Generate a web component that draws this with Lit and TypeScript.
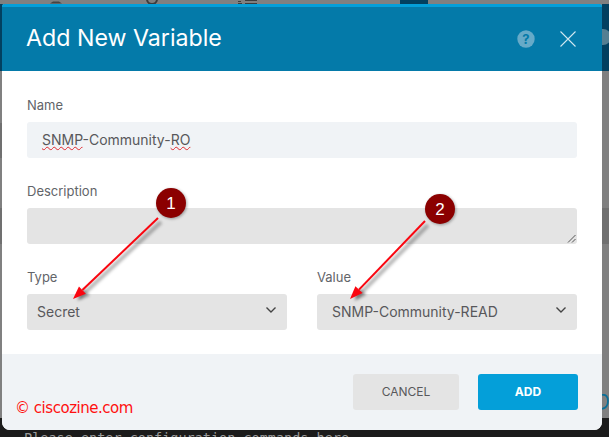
import { LitElement, html, css, svg } from "lit";
import { customElement } from "lit/decorators.js";

@customElement("app-root")
export class AppRoot extends LitElement {
  static styles = css`
    :host { display: block; width: 609px; height: 437px; overflow: hidden; position: relative; background: #808080; font-family: Inter, "Liberation Sans", sans-serif; }
    .back { position: absolute; }
    .band-l { left: 0; top: 4px; width: 3px; height: 67px; background: #024060; }
    .band-r { left: 602px; top: 4px; width: 7px; height: 67px; background: #024060; overflow: hidden; }
    .help-bg { position: absolute; left: -7px; top: 25px; width: 16px; height: 16px; border-radius: 50%; background: #557f92; }
    .strip { background: #707070; }
    .s1 { left: 0; top: 123px; width: 2px; height: 35px; }
    .s2 { left: 0; top: 208px; width: 2px; height: 36px; }
    .s3 { left: 602px; top: 208px; width: 7px; height: 36px; }
    .block { left: 400px; top: 0; width: 28px; height: 4px; background: #024060; }
    .term { left: 0; top: 418px; width: 609px; height: 19px; background: #1b1b1b; color: #9a9a9a; font: 13.5px/1 "DejaVu Sans Mono", monospace; padding: 13.5px 0 0 24px; box-sizing: border-box; white-space: pre; }
    .topglyph { position: absolute; top: 0; left: 0; }
    .sideglyph { position: absolute; left: 602px; top: 394px; }
    .modal { position: absolute; left: 2px; top: 4px; width: 600px; height: 426px; display: flex; flex-direction: column; background: #fff; border-radius: 3px 3px 8px 8px; overflow: hidden; }
    header { height: 64px; flex: none; border-top: 3px solid #049fd9; background: #047aa9; display: flex; align-items: center; padding: 0 26px 0 24px; color: #fff; }
    h1 { margin: 0; flex: 1; font-size: 23.2px; font-weight: 400; line-height: 1; }
    .hd-icons { display: flex; align-items: center; gap: 25px; }
    .hd-icons svg { display: block; }
    .close { margin-top: -1px; }
    main { flex: 1; padding: 25px 25px 0; display: flex; flex-direction: column; }
    label { display: block; height: 18px; line-height: 18px; font-size: 13px; color: #626469; margin-bottom: 8px; }
    .field { height: 36px; border-radius: 3px; box-sizing: border-box; display: flex; align-items: center; font-size: 14px; color: #58585b; position: relative; flex: none; }
    .name { background: #f0f3f6; padding: 0 0 2px 15px; margin-bottom: 24px; }
    .spell { text-decoration: underline wavy #e0282e 1px; text-underline-offset: 1px; text-decoration-skip-ink: none; }
    .desc { background: #e4e4e4; margin-bottom: 24px; }
    .grip { position: absolute; right: 1px; bottom: 1px; }
    .row { display: grid; grid-template-columns: 260px 260px; gap: 30px; }
    .sel { background: #e4e4e4; justify-content: space-between; padding: 0 10px 2px 10px; }
    .sel.v { padding-left: 15px; }
    .sel svg { display: block; margin-bottom: 2px; }
    footer { height: 76px; box-sizing: border-box; flex: none; background: #f0f3f6; display: flex; align-items: flex-start; justify-content: flex-end; gap: 19px; padding: 20px 24px 0 0; position: relative; }
    button { height: 36px; border: 0; border-radius: 3px; font: 400 12px Inter, "Liberation Sans", sans-serif; padding: 0 0 2px; }
    .cancel { width: 106px; background: #e4e4e4; color: #58585b; }
    .add { width: 100px; background: #049fd9; color: #fff; font-weight: 700; }
    .mark { position: absolute; left: 15px; top: 401px; color: #ff1010; font: 15px/1 "DejaVu Sans", sans-serif; letter-spacing: -0.47px; }
    .anno { position: absolute; left: 0; top: 0; pointer-events: none; }
    .num { font: 17px "Liberation Sans", sans-serif; fill: #fff; text-anchor: middle; }
  `;

  private arrow(x1: number, y1: number, x2: number, y2: number) {
    const dx = x2 - x1, dy = y2 - y1;
    const l = Math.hypot(dx, dy), ux = dx / l, uy = dy / l;
    const bx = x2 - ux * 13, by = y2 - uy * 13;
    const nx = -uy * 5, ny = ux * 5;
    const head = `${x2},${y2} ${bx + nx},${by + ny} ${bx - nx},${by - ny}`;
    return svg`
      <line x1=${x1 + 3} y1=${y1 + 4} x2=${x2 + 6} y2=${y2 - 1} stroke="#000" stroke-opacity=".28" stroke-width="4" filter="url(#b)"/>
      <polygon points=${head} fill="#000" fill-opacity=".3" transform="translate(4 2)" filter="url(#b)"/>
      <line x1=${x1} y1=${y1} x2=${bx} y2=${by} stroke="#fa0610" stroke-width="2"/>
      <polygon points=${head} fill="#fa0610"/>`;
  }

  private badge(cx: number, cy: number, n: string) {
    return svg`
      <circle cx=${cx + 1} cy=${cy + 1} r="15" fill="#000" fill-opacity=".35" filter="url(#b)"/>
      <circle cx=${cx} cy=${cy} r="15" fill="#8b0000"/>
      <text class="num" x=${cx} y=${cy + 6}>${n}</text>`;
  }

  private chevron() {
    return html`<svg width="12" height="8" viewBox="0 0 12 8"><path d="M1.5 1.5 6 6l4.5-4.5" fill="none" stroke="#444" stroke-width="1.4"/></svg>`;
  }

  render() {
    return html`
      <svg class="topglyph" width="609" height="4" viewBox="0 0 609 4">
        <path d="M50 3.5h12l-3-2h-6z" fill="#444"/>
        <circle cx="152" cy="-1" r="5" fill="none" stroke="#3c3c3c" stroke-width="2"/>
        <path d="M238 1.5h3M238 3.5h4M245 .5h12M245 3.5h12" stroke="#3c3c3c" stroke-width="1.2"/>
      </svg>
      <div class="back block"></div>
      <div class="back band-l"></div>
      <div class="back band-r"><div class="help-bg"></div></div>
      <div class="back strip s1"></div>
      <div class="back strip s2"></div>
      <div class="back strip s3"></div>
      <svg class="sideglyph" width="7" height="17" viewBox="0 0 7 17"><path d="M0 1c4-1 6 2 6 6s-2 7-6 8" fill="none" stroke="#0b6f98" stroke-width="1.8"/></svg>
      <div class="back term">Please enter configuration commands here</div>
      <div class="modal">
        <header>
          <h1>Add New Variable</h1>
          <div class="hd-icons">
            <svg width="18" height="18" viewBox="0 0 18 18">
              <circle cx="9" cy="9" r="8.7" fill="#66aac8"/>
              <text x="9" y="13.5" font-size="13" font-weight="700" text-anchor="middle" fill="#047aa9" font-family="Inter, sans-serif">?</text>
            </svg>
            <svg class="close" width="16" height="16" viewBox="0 0 16 16"><path d="M.5.5l15 15M15.5.5l-15 15" stroke="#cfe6f0" stroke-width="1.1" fill="none"/></svg>
          </div>
        </header>
        <main>
          <label>Name</label>
          <div class="field name"><span><span class="spell">SNMP</span>-Community-<span class="spell">RO</span></span></div>
          <label>Description</label>
          <div class="field desc">
            <svg class="grip" width="9" height="9" viewBox="0 0 9 9"><path d="M1 8.5 8.5 1M5 8.5 8.5 5" stroke="#555" stroke-width="1" fill="none"/></svg>
          </div>
          <div class="row">
            <div><label>Type</label><div class="field sel"><span>Secret</span>${this.chevron()}</div></div>
            <div><label>Value</label><div class="field sel v"><span>SNMP-Community-READ</span>${this.chevron()}</div></div>
          </div>
        </main>
        <footer>
          <button class="cancel">CANCEL</button>
          <button class="add">ADD</button>
        </footer>
      </div>
      <div class="mark">© ciscozine.com</div>
      <svg class="anno" width="609" height="437" viewBox="0 0 609 437">
        <defs><filter id="b" x="-30%" y="-30%" width="160%" height="160%"><feGaussianBlur stdDeviation="1.5"/></filter></defs>
        ${this.arrow(158, 218, 73, 299)}
        ${this.arrow(425, 221, 350, 299)}
        ${this.badge(171, 203, "1")}
        ${this.badge(440, 209, "2")}
      </svg>
    `;
  }
}
